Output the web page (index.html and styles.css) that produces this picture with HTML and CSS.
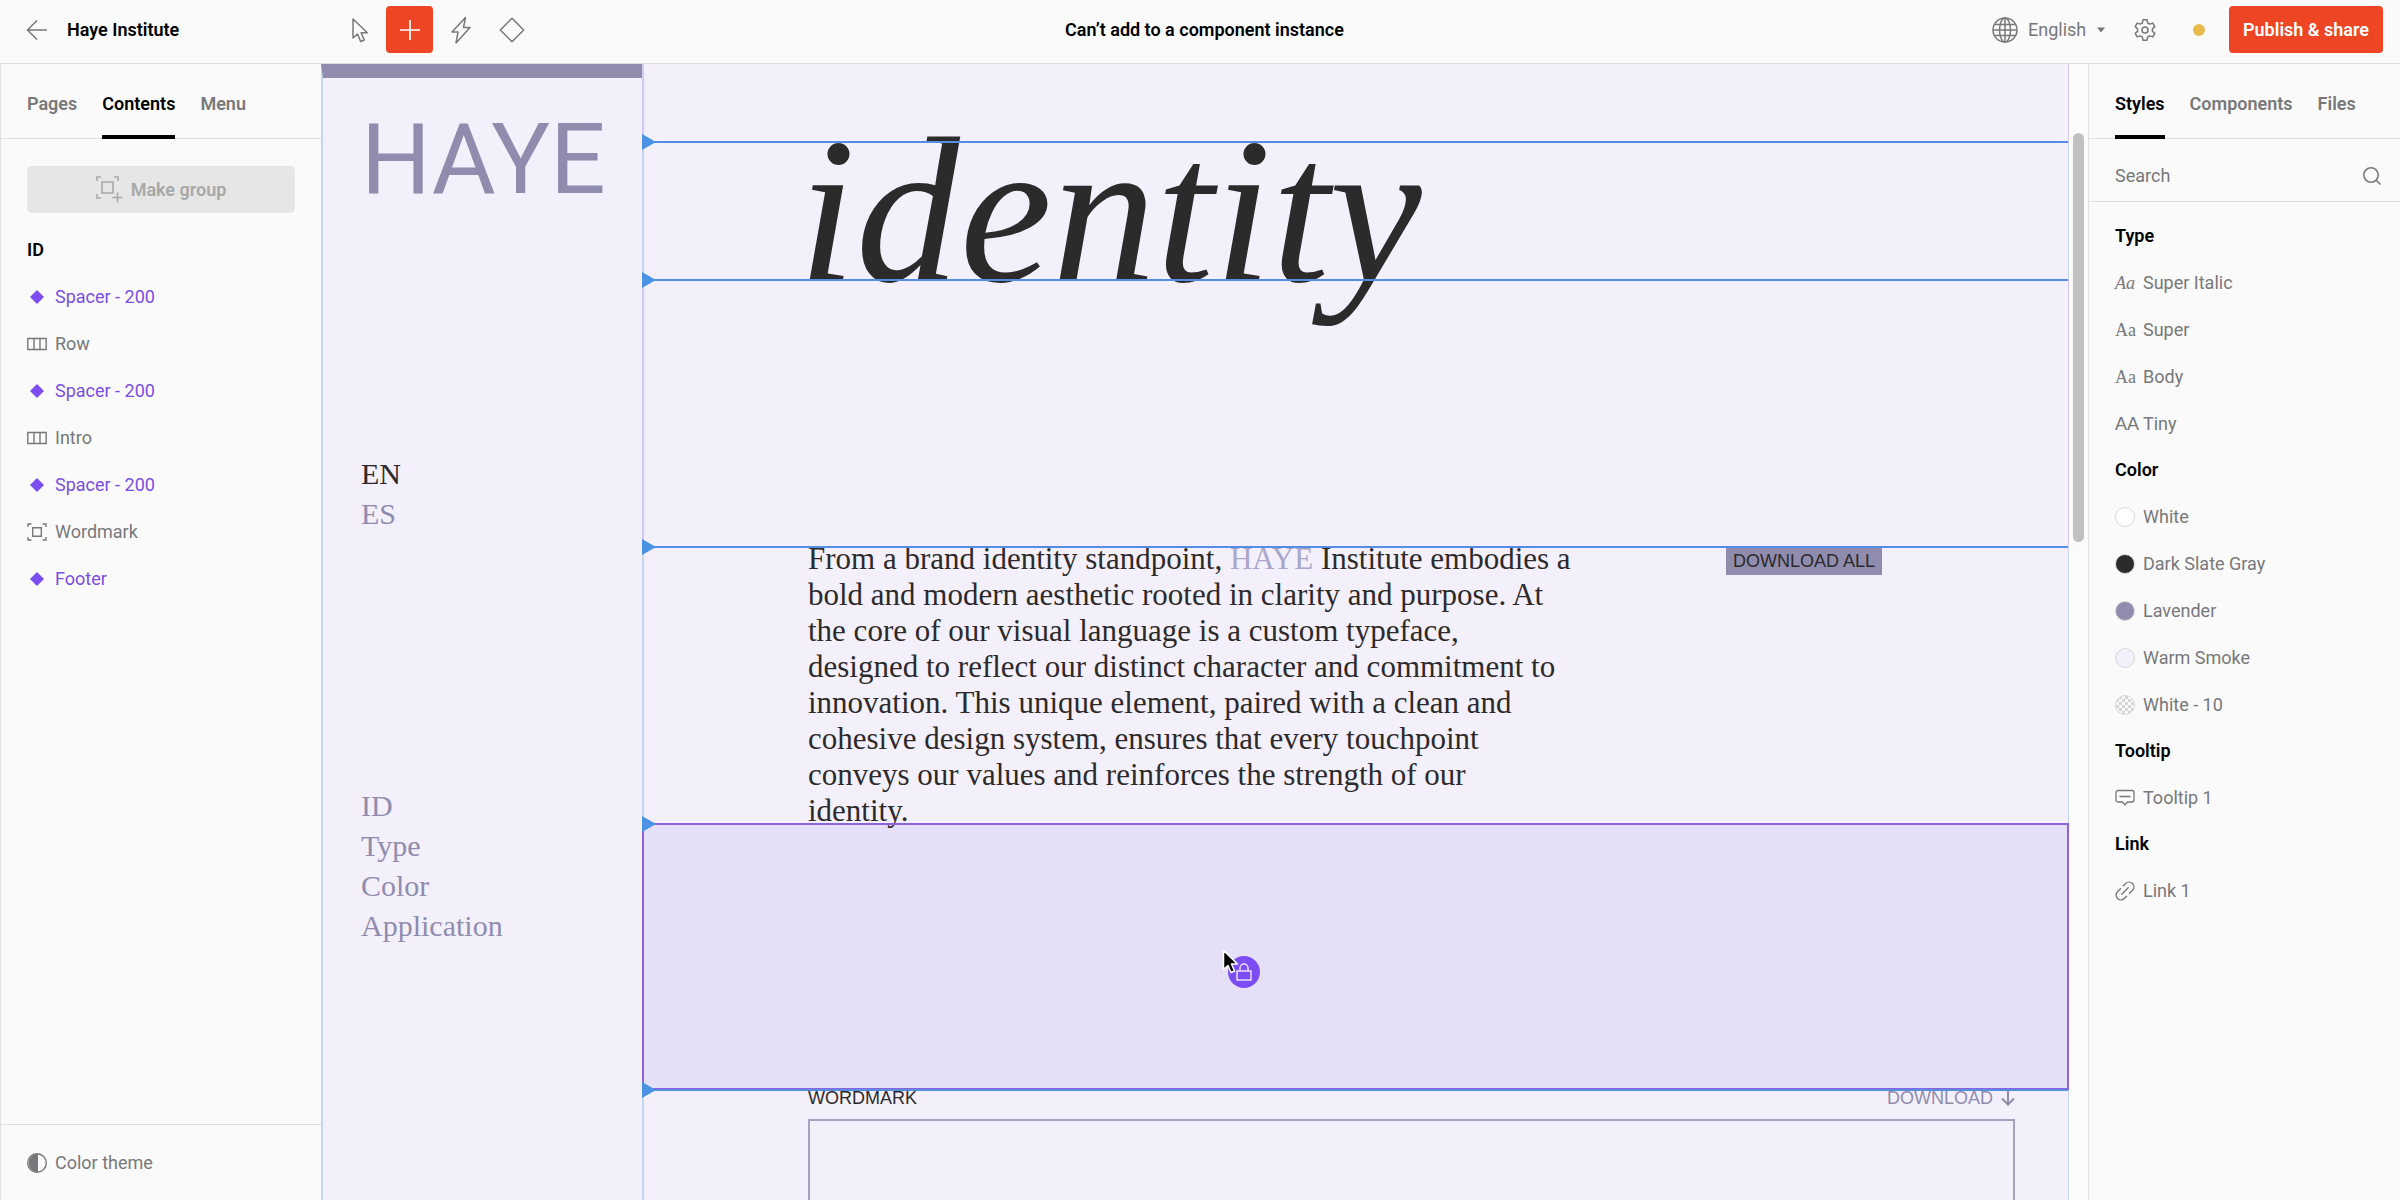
FILE: index.html
```html
<!DOCTYPE html>
<html lang="en">
<head>
    <meta charset="UTF-8">
    <meta name="viewport" content="width=device-width, initial-scale=1.0">
    <title>Haye Institute</title>
    <link rel="stylesheet" href="styles.css">
</head>
<body>
    <!-- shared icons -->
    <svg class="sprite" aria-hidden="true">
        <symbol id="i-diamond" viewBox="0 0 20 20"><path d="M10 3l7 7-7 7-7-7z" fill="#7c4df2"/></symbol>
        <symbol id="i-row" viewBox="0 0 20 20"><path d="M.8 4.5h18.4v11H.8zM7 4.5v11M13 4.5v11" fill="none" stroke="currentColor" stroke-width="1.4"/></symbol>
        <symbol id="i-group" viewBox="0 0 20 20"><path d="M1 5V2h3.500M15.500 2H19v3M19 15v3h-3.500M4.500 18H1v-3M5.700 5.700h8.600v8.600H5.700z" fill="none" stroke="currentColor" stroke-width="1.4"/></symbol>
    </svg>

    <header class="topbar">
        <div class="topbar-left">
            <a class="back" href="#" aria-label="Back">
                <svg width="22" height="22" viewBox="0 0 22 22"><path d="M21 11H2M11 1.500L1.500 11l9.500 9.500" fill="none" stroke="currentColor" stroke-width="1.5"/></svg>
            </a>
            <span class="site-name">Haye Institute</span>
            <div class="tools">
                <button class="tool" aria-label="Select">
                    <svg width="28" height="28" viewBox="0 0 28 28"><path d="M8 3v19l4.500-4 3.200 7.500 3.600-1.500-3.200-7.300h6.200z" fill="none" stroke="currentColor" stroke-width="1.5" stroke-linejoin="round"/></svg>
                </button>
                <button class="tool tool-active" aria-label="Add">
                    <svg width="28" height="28" viewBox="0 0 28 28"><path d="M14 4v20M4 14h20" stroke="currentColor" stroke-width="1.7"/></svg>
                </button>
                <button class="tool" aria-label="Interactions">
                    <svg width="28" height="28" viewBox="0 0 28 28"><path d="M18.500 1.500L5 16h6L9 27l14-15.500h-6.500z" fill="none" stroke="currentColor" stroke-width="1.500" stroke-linejoin="round"/></svg>
                </button>
                <button class="tool" aria-label="Component">
                    <svg width="28" height="28" viewBox="0 0 28 28"><path d="M14 2.300L25.700 14 14 25.700 2.300 14z" fill="none" stroke="currentColor" stroke-width="1.5" stroke-linejoin="round"/></svg>
                </button>
            </div>
        </div>
        <p class="notice">Can’t add to a component instance</p>
        <div class="topbar-right">
            <label class="language">
                <svg width="26" height="26" viewBox="0 0 26 26"><g fill="none" stroke="currentColor" stroke-width="1.5"><circle cx="13" cy="13" r="12"/><ellipse cx="13" cy="13" rx="5.500" ry="12"/><path d="M13 1v24M1 13h24M3 7.500h20M3 18.500h20"/></g></svg>
                <select aria-label="Language">
                    <option>English</option>
                </select>
                <svg width="8" height="6" viewBox="0 0 8 6"><path d="M0 .5h8L4 5.500z" fill="currentColor"/></svg>
            </label>
            <button class="settings" aria-label="Settings">
                <svg width="24" height="24" viewBox="0 0 24 24"><g fill="none" stroke="currentColor" stroke-width="1.5" stroke-linejoin="round"><circle cx="12" cy="12" r="3"/><path d="M10 1.800h4l.7 3.200 2 1.100 3.100-1 2 3.500-2.400 2.200v2.400l2.400 2.200-2 3.500-3.100-1-2 1.100-.7 3.200h-4L9.300 19l-2-1.100-3.100 1-2-3.500 2.400-2.200v-2.400L2.200 8.600l2-3.500 3.100 1 2-1.100z"/></g></svg>
            </button>
            <span class="status-dot"></span>
            <button class="publish">Publish &amp; share</button>
        </div>
    </header>

    <div class="workspace">
        <aside class="panel panel-left">
            <nav class="tabs">
                <button class="tab">Pages</button>
                <button class="tab tab-active">Contents</button>
                <button class="tab">Menu</button>
            </nav>
            <button class="make-group" disabled>
                <svg width="27" height="27" viewBox="0 0 27 27"><path d="M1 5V1h4M18 1h4v4M5 22H1v-4M6 6h11v11H6zM21.500 16.500v10M16.500 21.500h10" fill="none" stroke="currentColor" stroke-width="1.600"/></svg>
                Make group
            </button>
            <h2 class="list-title">ID</h2>
            <ul class="list">
                <li><button class="item item-component"><svg class="icon"><use href="#i-diamond"/></svg>Spacer - 200</button></li>
                <li><button class="item"><svg class="icon"><use href="#i-row"/></svg>Row</button></li>
                <li><button class="item item-component"><svg class="icon"><use href="#i-diamond"/></svg>Spacer - 200</button></li>
                <li><button class="item"><svg class="icon"><use href="#i-row"/></svg>Intro</button></li>
                <li><button class="item item-component"><svg class="icon"><use href="#i-diamond"/></svg>Spacer - 200</button></li>
                <li><button class="item"><svg class="icon"><use href="#i-group"/></svg>Wordmark</button></li>
                <li><button class="item item-component"><svg class="icon"><use href="#i-diamond"/></svg>Footer</button></li>
            </ul>
            <div class="panel-footer">
                <button class="item">
                    <svg class="icon" viewBox="0 0 20 20"><circle cx="10" cy="10" r="9.300" fill="none" stroke="currentColor" stroke-width="1.400"/><path d="M11 .7a9.300 9.300 0 1 0 0 18.600z" fill="currentColor"/></svg>
                    Color theme
                </button>
            </div>
        </aside>

        <main class="canvas">
            <div class="site-nav">
                <a class="logo" href="#">HAYE</a>
                <nav class="nav-group">
                    <a class="nav-current" href="#">EN</a>
                    <a href="#">ES</a>
                </nav>
                <nav class="nav-group">
                    <a href="#">ID</a>
                    <a href="#">Type</a>
                    <a href="#">Color</a>
                    <a href="#">Application</a>
                </nav>
            </div>

            <div class="site-page">
                <section class="section section-top"></section>
                <section class="section section-row guide">
                    <h1>identity</h1>
                </section>
                <section class="section spacer guide"></section>
                <section class="section section-intro guide">
                    <p class="intro">
                        From a brand identity standpoint, <span class="brand">HAYE</span> Institute embodies a<br>
                        bold and modern aesthetic rooted in clarity and purpose. At<br>
                        the core of our visual language is a custom typeface,<br>
                        designed to reflect our distinct character and commitment to<br>
                        innovation. This unique element, paired with a clean and<br>
                        cohesive design system, ensures that every touchpoint<br>
                        conveys our values and reinforces the strength of our<br>
                        identity.
                    </p>
                    <a class="download-all" href="#">DOWNLOAD ALL</a>
                </section>
                <section class="section spacer spacer-selected guide">
                    <!-- locked badge under the pointer -->
                    <div class="lock-badge">
                        <svg width="16" height="18" viewBox="0 0 16 18"><path d="M1 8h14v9H1zM4 8V5a4 4 0 0 1 8 0v3" fill="none" stroke="#e9defc" stroke-width="1.500"/></svg>
                    </div>
                    <svg class="pointer" width="18" height="26" viewBox="0 0 18 26"><path d="M1.500 1.500v19l4.500-4 3 7 3.500-1.500-3-7h6z" fill="#000" stroke="#fff" stroke-width="1.500" stroke-linejoin="round"/></svg>
                </section>
                <section class="section section-wordmark guide">
                    <div class="wordmark-head">
                        <span>WORDMARK</span>
                        <a class="download" href="#">DOWNLOAD
                            <svg width="14" height="16" viewBox="0 0 14 16"><path d="M7 0v14M1 8.500l6 6 6-6" fill="none" stroke="currentColor" stroke-width="2"/></svg>
                        </a>
                    </div>
                    <div class="wordmark-box"></div>
                </section>
            </div>

            <div class="scrollbar"><div class="thumb"></div></div>
        </main>

        <aside class="panel panel-right">
            <nav class="tabs">
                <button class="tab tab-active">Styles</button>
                <button class="tab">Components</button>
                <button class="tab">Files</button>
            </nav>
            <label class="search">
                <input type="text" placeholder="Search" aria-label="Search">
                <svg width="20" height="20" viewBox="0 0 20 20"><g fill="none" stroke="currentColor" stroke-width="1.600"><circle cx="9" cy="9" r="7.200"/><path d="M14 14l4.500 4.500"/></g></svg>
            </label>
            <div class="styles">
                <h2 class="list-title">Type</h2>
                <ul class="list">
                    <li><button class="item"><span class="icon sample sample-italic">Aa</span>Super Italic</button></li>
                    <li><button class="item"><span class="icon sample">Aa</span>Super</button></li>
                    <li><button class="item"><span class="icon sample">Aa</span>Body</button></li>
                    <li><button class="item"><span class="icon sample sample-sans">AA</span>Tiny</button></li>
                </ul>
                <h2 class="list-title">Color</h2>
                <ul class="list">
                    <li><button class="item"><span class="icon swatch white"></span>White</button></li>
                    <li><button class="item"><span class="icon swatch slate"></span>Dark Slate Gray</button></li>
                    <li><button class="item"><span class="icon swatch lavender"></span>Lavender</button></li>
                    <li><button class="item"><span class="icon swatch smoke"></span>Warm Smoke</button></li>
                    <li><button class="item"><span class="icon swatch white-10"></span>White - 10</button></li>
                </ul>
                <h2 class="list-title">Tooltip</h2>
                <ul class="list">
                    <li><button class="item">
                        <svg class="icon" viewBox="0 0 20 20"><path d="M3 2.500h14a2 2 0 0 1 2 2V12a2 2 0 0 1-2 2h-4.500L10 17l-2.500-3H3a2 2 0 0 1-2-2V4.500a2 2 0 0 1 2-2zM4.500 8.500h11" fill="none" stroke="currentColor" stroke-width="1.300"/></svg>
                        Tooltip 1
                    </button></li>
                </ul>
                <h2 class="list-title">Link</h2>
                <ul class="list">
                    <li><button class="item">
                        <svg class="icon" viewBox="0 0 20 20"><path d="M8.500 5.200H4.200a4.800 4.800 0 0 0 0 9.600H7.500M11.500 14.800h4.300a4.800 4.800 0 0 0 0-9.600h-3.300M5.500 10h9" transform="rotate(-45 10 10)" fill="none" stroke="currentColor" stroke-width="1.400" stroke-linecap="round"/></svg>
                        Link 1
                    </button></li>
                </ul>
            </div>
        </aside>
    </div>
</body>
</html>
```
FILE: styles.css
```css
/* styles.css */
* {
    box-sizing: border-box;
}

body {
    margin: 0;
    height: 100vh;
    display: flex;
    flex-direction: column;
    overflow: hidden;
    font-family: Roboto, "Liberation Sans", sans-serif;
    font-size: 18px;
    line-height: 24px;
    color: #78787a;
    background-color: #fafafa;
}

h1, h2, p, ul {
    margin: 0;
    padding: 0;
}

ul {
    list-style: none;
}

a {
    color: inherit;
    text-decoration: none;
}

button, input, select {
    font: inherit;
    color: inherit;
    border: 0;
    padding: 0;
    background: none;
}

svg {
    display: block;
    flex: none;
}

.sprite {
    position: absolute;
    width: 0;
    height: 0;
}

/* top bar */
.topbar {
    display: grid;
    grid-template-columns: 1fr auto 1fr;
    align-items: center;
    height: 64px;
    padding: 0 17px 4px 26px;
    border-bottom: 1px solid #dfdfdf;
}

.topbar-left {
    display: flex;
    align-items: center;
}

.site-name {
    width: 268px;
    margin-left: 19px;
    font-weight: 600;
    color: #000;
}

.tools {
    display: flex;
    gap: 4px;
}

.tool {
    display: flex;
    align-items: center;
    justify-content: center;
    width: 47px;
    height: 47px;
    border-radius: 4px;
}

.tool-active {
    color: #fff;
    background-color: #ee4524;
}

.notice {
    font-weight: 600;
    color: #000;
}

.topbar-right {
    display: flex;
    align-items: center;
    justify-content: flex-end;
}

.language {
    display: flex;
    align-items: center;
    gap: 10px;
}

select {
    appearance: none;
}

.settings {
    margin: 0 36px 0 28px;
}

.status-dot {
    width: 12px;
    height: 12px;
    margin-right: 24px;
    border-radius: 50%;
    background-color: #e9b94c;
}

.publish {
    height: 47px;
    padding: 0 14px;
    border-radius: 4px;
    font-weight: 600;
    color: #fff;
    background-color: #ee4524;
}

/* panels */
.workspace {
    flex: 1;
    min-height: 0;
    display: grid;
    grid-template-columns: 321px 1fr 312px;
}

.panel {
    display: flex;
    flex-direction: column;
    border-left: 1px solid #e2e2e2;
}

.tabs {
    display: flex;
    gap: 25px;
    height: 75px;
    padding: 0 26px;
    border-bottom: 1px solid #dfdfdf;
}

.tab {
    height: 75px;
    padding-top: 8px;
    border-bottom: 4px solid transparent;
    font-weight: 600;
}

.tab-active {
    color: #000;
    border-color: #000;
}

.make-group {
    display: flex;
    align-items: center;
    justify-content: center;
    gap: 8px;
    height: 47px;
    margin: 27px 26px 14px;
    border-radius: 5px;
    font-weight: 600;
    color: #a8a8a8;
    background-color: #e6e6e6;
}

.list-title {
    padding: 0 26px;
    font-size: 18px;
    font-weight: 600;
    line-height: 46px;
    color: #000;
}

.item {
    display: flex;
    align-items: center;
    gap: 8px;
    width: 100%;
    height: 47px;
    padding: 0 26px;
}

.item-component {
    color: #7a4fe0;
}

.icon {
    flex: none;
    width: 20px;
    height: 20px;
}

.panel-footer {
    margin-top: auto;
    padding: 14px 0;
    border-top: 1px solid #dfdfdf;
}

.search {
    display: flex;
    align-items: center;
    justify-content: space-between;
    height: 63px;
    padding: 12px 18px 0 26px;
    border-bottom: 1px solid #dfdfdf;
}

.search input {
    flex: 1;
    min-width: 0;
    outline: 0;
}

.search input::placeholder {
    color: #78787a;
    opacity: 1;
}

.styles {
    padding-top: 11px;
}

.sample {
    font-family: "Liberation Serif", serif;
    font-size: 18px;
    line-height: 20px;
    text-align: left;
}

.sample-italic {
    font-style: italic;
}

.sample-sans {
    font-family: "Liberation Sans", sans-serif;
}

.swatch {
    border: 1px solid #d9d9d9;
    border-radius: 50%;
}

.white {
    background-color: #fff;
}

.slate {
    background-color: #2d2a2b;
}

.lavender {
    background-color: #908cae;
}

.smoke {
    background-color: #f3f0fb;
}

.white-10 {
    background: repeating-conic-gradient(#d6d6d6 0 25%, #fafafa 0 50%) 0 0 / 6px 6px;
}

/* canvas */
.canvas {
    display: grid;
    grid-template-columns: 321px 1fr 19px;
    min-width: 0;
    overflow: hidden;
    font-size: 30px;
    background-color: #f3f0fb;
}

.site-nav {
    border-top: 14px solid #908cae;
    border-left: 2px solid #c5d7f0;
    padding: 40px 0 0 38px;
    font-family: "Liberation Serif", serif;
    line-height: 40px;
    color: #908cae;
}

.logo {
    display: block;
    font-family: Roboto, sans-serif;
    font-size: 98px;
    line-height: 84px;
}

.nav-group {
    display: flex;
    flex-direction: column;
    margin-top: 252px;
}

.nav-current {
    color: #2d2a2b;
}

.site-page {
    display: flex;
    flex-direction: column;
    min-width: 0;
    color: #2d2a2b;
}

.section {
    position: relative;
    flex: none;
    padding: 0 53px 0 164px;
    border: solid #c5d7f0;
    border-width: 0 1px 0 2px;
}

.section-top,
.spacer {
    border-color: #d3c8f3;
}

/* blue line and marker on the upper edge of a section */
.guide::before {
    content: "";
    position: absolute;
    z-index: 1;
    top: -1px;
    left: 0;
    right: 0;
    height: 2px;
    background-color: #568de3;
}

.guide::after {
    content: "";
    position: absolute;
    z-index: 1;
    top: -8px;
    left: -2px;
    border: solid transparent;
    border-width: 8px 0 8px 14px;
    border-left-color: #4a92e4;
}

.section-top {
    height: 78px;
}

h1 {
    margin-left: -10px;
    font-family: "Liberation Serif", serif;
    font-size: 208px;
    font-style: italic;
    font-weight: 400;
    line-height: 138px;
}

.spacer {
    height: 267px;
}

/* the last line hangs over the next section */
.section-intro {
    z-index: 1;
    display: grid;
    grid-template-columns: 918px 1fr;
    align-items: start;
}

.intro {
    margin: -6px 0;
    font-family: "Liberation Serif", serif;
    font-size: 31px;
    line-height: 36px;
    white-space: nowrap;
}

.brand {
    color: #aaa5cb;
}

.download-all {
    justify-self: start;
    padding: 2px 7px;
    font-family: "Liberation Sans", sans-serif;
    font-size: 18px;
    line-height: 24px;
    background-color: #908cae;
}

.spacer-selected {
    background-color: #e5e0f7;
    border: 2px solid #8b65de;
}

.spacer-selected::before {
    top: -2px;
    background-color: #8b65de;
}

.spacer-selected::after {
    top: -9px;
}

.lock-badge {
    position: absolute;
    top: 131px;
    left: 584px;
    display: flex;
    align-items: center;
    justify-content: center;
    width: 32px;
    height: 32px;
    border-radius: 50%;
    background-color: #7c4df2;
}

.pointer {
    position: absolute;
    top: 124px;
    left: 578px;
}

.section-wordmark {
    flex: 1;
    display: flex;
    flex-direction: column;
}

.wordmark-head {
    display: flex;
    justify-content: space-between;
    font-family: "Liberation Sans", sans-serif;
    font-size: 18px;
    line-height: 16px;
}

.download {
    display: flex;
    gap: 8px;
    color: #908cae;
}

.wordmark-box {
    flex: 1;
    margin-top: 13px;
    border: 2px solid #a5a1be;
    border-bottom: 0;
}

.scrollbar {
    padding: 69px 4px 0;
    background-color: #fbfbfb;
}

.thumb {
    height: 409px;
    border-radius: 6px;
    background-color: #c1c1c1;
}
```
